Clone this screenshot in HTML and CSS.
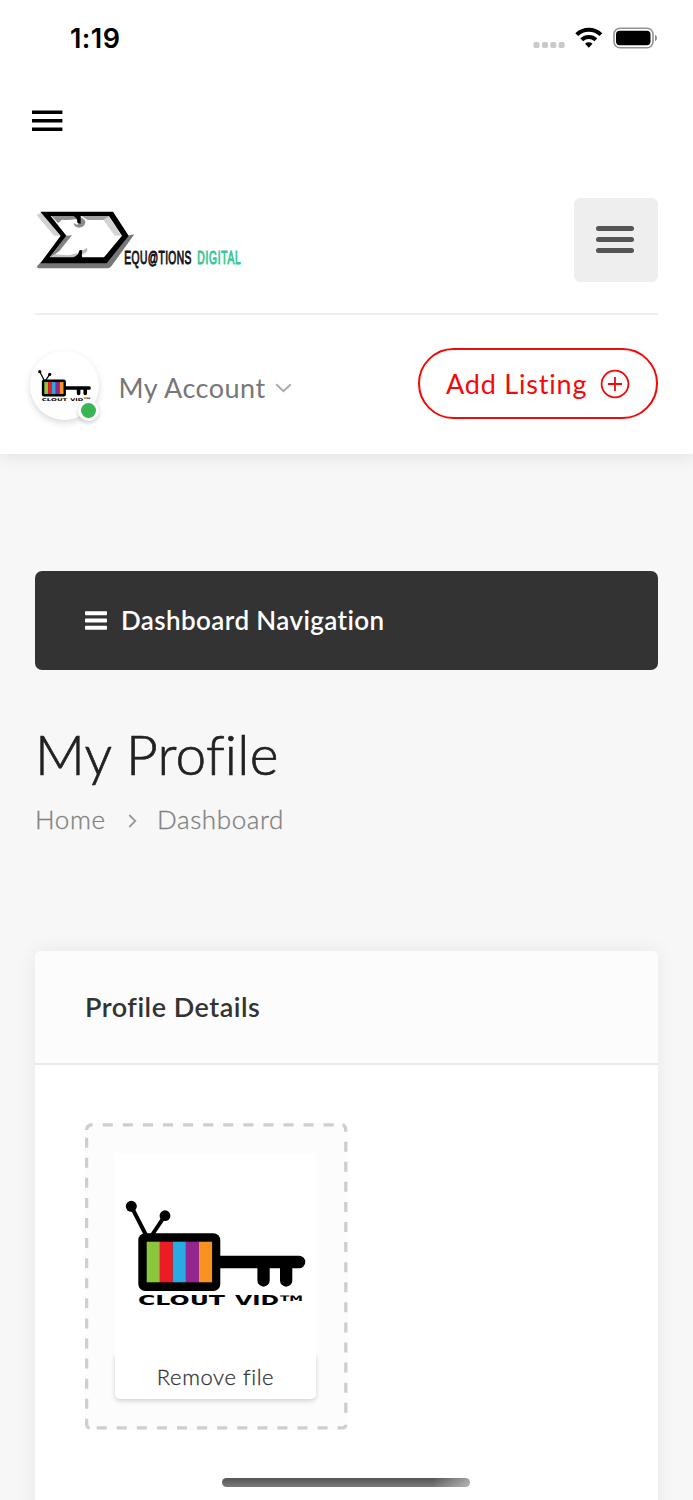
FILE: index.html
```html
<!DOCTYPE html>
<html lang="en">
<head>
<meta charset="utf-8">
<title>My Profile</title>
<link rel="stylesheet" href="styles.css">
</head>
<body>
<header class="header">
  <div class="status">
    <span class="time">1:19</span>
    <svg class="status-icons" width="126" height="24" viewBox="0 0 126 24">
      <g fill="#c9c9c9"><rect x="1.5" y="17" width="6" height="6" rx="1.7"/><rect x="10" y="17" width="6" height="6" rx="1.7"/><rect x="18.3" y="17" width="6" height="6" rx="1.7"/><rect x="26.6" y="17" width="6" height="6" rx="1.7"/></g>
      <g fill="none" stroke="#000" stroke-width="4"><path d="M44.7 9.7a17.2 17.2 0 0 1 24.2 0"/><path d="M49.7 14.8a10.2 10.2 0 0 1 14.2 0"/></g>
      <path d="M53.1 18.7a5.4 5.4 0 0 1 7.4 0l-3.7 4z"/>
      <rect x="82" y="3.3" width="39" height="19.4" rx="6" fill="none" stroke="#929292" stroke-width="1.6"/>
      <rect x="84" y="5.8" width="34.5" height="14.5" rx="3.7"/>
      <path d="M123 9.8q2 1 2 3.2t-2 3.2z" fill="#8c8c8c"/>
    </svg>
  </div>
  <div class="appbar">
    <svg width="31" height="22" viewBox="0 0 31 22"><path d="M0 .4h30.4v3.5H0zm0 8.7h30.4v3.4H0zm0 8.4h30.4v3.4H0z"/></svg>
  </div>
  <div class="brand-row">
    <svg class="logo" width="230" height="100" viewBox="0 0 690 300">
      <g transform="translate(21 45)">
        <path d="M14 30 30 22 86 92H66z" fill="#d2d2d2"/>
        <path d="M16 182 28 170H222L286 92 307 88 238 184Q234 190 226 190H20Q14 190 16 182z" fill="#777"/>
        <path d="M52 160 102 92 120 91 82 138z" fill="#828282"/>
        <path d="M70 148 52 160H122Q136 156 141 150L134 144Q120 152 98 150z" fill="#c4c4c4"/>
        <path d="M56 30H134V42Q110 46 90 44L78 54z" fill="#909090"/>
        <path d="M144 30H232V45H168L156 38z" fill="#a0a0a0"/>
        <path d="M214 44 248 92 268 92 230 34z" fill="#d4d4d4"/>
        <path d="M144 36Q162 44 160 54 156 68 140 68 126 66 125 54L136 60z" fill="#8b8b8b"/>
        <path d="M148 140 164 128Q170 136 160 144L148 150z" fill="#bcbcbc"/>
        <path fill-rule="evenodd" d="M25 20H243L290 92 224 175H25L86 92zM56 33 103 92 53 157H124Q138 153 143 135L151 136Q148 150 151 157H216L270 92 231 33H146V56L136 53Q136 38 124 33z"/>
      </g>
      <text transform="translate(298 222) scale(.56 1)" class="logo-word" textLength="359">EQU@TIONS</text>
      <text transform="translate(517 222) scale(.56 1)" class="logo-word green" textLength="233">DIGITAL</text>
    </svg>
    <button class="menu-btn" aria-label="Menu"><i></i><i></i><i></i></button>
  </div>
  <div class="account-row">
    <div class="avatar"><svg width="59" height="59" viewBox="0 0 201 201"><use href="#cloutvid"/></svg><b class="online"></b></div>
    <span class="account">My Account</span>
    <svg class="chev" width="17" height="10" viewBox="0 0 17 10"><path d="M1.2 1.2 8.5 8.2l7.3-7" fill="none" stroke="#aaa" stroke-width="2"/></svg>
    <a class="add"><span>Add Listing</span>
      <svg width="30" height="30" viewBox="0 0 30 30" fill="none" stroke="#f50808" stroke-width="1.8"><circle cx="15" cy="15" r="13.4"/><path d="M8 15h14M15 8v14"/></svg></a>
  </div>
</header>

<main class="main">
  <div class="dashnav">
    <svg width="22" height="19" viewBox="0 0 22 19" fill="#fff"><rect y=".3" width="22" height="4" rx=".8"/><rect y="7.5" width="22" height="4" rx=".8"/><rect y="14.7" width="22" height="4" rx=".8"/></svg>
    <span>Dashboard Navigation</span>
  </div>
  <h1 class="title">My Profile</h1>
  <nav class="crumbs"><span class="home">Home</span>
    <svg class="sep" width="9" height="14" viewBox="0 0 9 14"><path d="M1.3 1 7.3 7l-6 6" fill="none" stroke="#999" stroke-width="1.8"/></svg>
    <span class="dash">Dashboard</span></nav>
  <section class="card">
    <h2 class="card-head">Profile Details</h2>
    <div class="card-body">
      <div class="drop">
        <svg class="dashes" width="263" height="307" viewBox="85 1123 263 307" fill="none" stroke="#cecece" stroke-width="3.3">
          <path d="M102.8 1124.8H335M96.7 1427.8H334" stroke-dasharray="10 10.08"/>
          <path d="M86.6 1137.7V1416M345.8 1141.7V1418" stroke-dasharray="10 10.08"/>
          <path d="M86.6 1130q0-5.2 6-5.2M342.5 1124.8q3.3.5 3.3 7M337.7 1427.8h5q3.1 0 3.1-3M86.6 1418.7v5.3q0 3.8 3 3.8"/>
        </svg>
        <svg class="photo" width="201" height="201" viewBox="0 0 201 201">
          <g id="cloutvid">
            <path d="M16.3 53.3 31.5 83M50 62.7 37 82" stroke="#000" stroke-width="4" fill="none"/>
            <circle cx="16.3" cy="53.3" r="5.5"/><circle cx="50" cy="62.7" r="5.4"/>
            <rect x="23.3" y="80.3" width="82" height="57.7" rx="7"/>
            <path d="M100 102.7h84a6.3 6.3 0 0 1 0 12.6h-6.7v12.2a6.15 6.15 0 0 1-12.3 0v-12.2h-10.3v12.2a6.15 6.15 0 0 1-12.3 0v-12.2H100z"/>
            <path fill="#8cc63f" d="M31.7 88.7h13.2v40.6H31.7z"/>
            <path fill="#ed1c24" d="M44.8 88.7h13v40.6h-13z"/>
            <path fill="#29abe2" d="M57.8 88.7h13.1v40.6H57.8z"/>
            <path fill="#93278f" d="M70.9 88.7H84v40.6H70.9z"/>
            <path fill="#f7931e" d="M84 88.7h13.1v40.6H84z"/>
            <text x="23" y="151.7" class="tv-word" textLength="87" lengthAdjust="spacingAndGlyphs">CLOUT</text>
            <text x="120" y="151.7" class="tv-word" textLength="44" lengthAdjust="spacingAndGlyphs">VID</text>
            <text x="165" y="147.7" class="tv-tm" textLength="23" lengthAdjust="spacingAndGlyphs">TM</text>
          </g>
        </svg>
        <button class="remove">Remove file</button>
      </div>
    </div>
  </section>
</main>
<div class="home-indicator"></div>
</body>
</html>
```
FILE: styles.css
```css
* { box-sizing: border-box; }
body { margin: 0; width: 693px; height: 1500px; overflow: hidden; position: relative; background: #f7f7f7; font-family: Lato, "Open Sans", sans-serif; color: #333; }
svg { display: block; flex: none; }
button { border: 0; padding: 0; font: inherit; color: inherit; }
.tv-word { font: bold 13.3px "DejaVu Sans", sans-serif; }
.tv-tm { font: bold 7.6px "DejaVu Sans", sans-serif; }
.header { position: relative; height: 454px; background: #fff; box-shadow: 0 0 20px rgba(0,0,0,.12); }
.status { height: 76px; display: flex; justify-content: space-between; padding: 0 35px 0 70px; }
.time { font: 600 27px/36px Inter, sans-serif; color: #000; padding-top: 21px; letter-spacing: .4px; }
.status-icons { margin-top: 25px; }
.appbar { height: 114px; padding: 34px 32px 0; }
.brand-row { height: 125px; margin: 0 35px; border-bottom: 2px solid #eee; display: flex; justify-content: space-between; }
.logo { margin-left: -10px; }
.logo-word { font: 55px "Liberation Sans", sans-serif; fill: #151219; stroke: #151219; stroke-width: 3; }
.logo-word.green { fill: #35c795; stroke: #35c795; }
.menu-btn { width: 84px; height: 84px; margin-top: 7.5px; border-radius: 6px; background: #eee; display: flex; flex-direction: column; align-items: center; justify-content: center; gap: 6.3px; padding-right: 2px; }
.menu-btn i { width: 38.5px; height: 4.8px; border-radius: 3px; background: #555; }
.account-row { height: 139px; padding: 0 35px 0 29.5px; display: flex; align-items: flex-start; }
.avatar { position: relative; width: 69px; height: 69px; margin-top: 36px; border-radius: 50%; background: #fff; box-shadow: 0 3px 7px rgba(0,0,0,.15); padding: 5px; }
.online { position: absolute; right: 0; bottom: -1px; width: 21px; height: 21px; border-radius: 50%; background: #38b653; border: 3.6px solid #fff; box-shadow: 0 2px 4px rgba(0,0,0,.2); }
.account { width: 147px; margin: 55px 0 0 20px; font-size: 27px; line-height: 36px; letter-spacing: .5px; color: #777; white-space: nowrap; }
.chev { margin: 68px 0 0 9.5px; }
.add { margin: 33px 0 0 auto; width: 240px; height: 71px; border: 2px solid #f50808; border-radius: 36px; color: #f50808; font-size: 27px; letter-spacing: .8px; display: flex; align-items: center; justify-content: space-between; padding: 0 26px; white-space: nowrap; }
.main { padding: 117px 35px 0; }
.dashnav { height: 99px; border-radius: 7px; background: #333; color: #fff; display: flex; align-items: center; gap: 14px; padding: 0 50px 1px; font-size: 26px; font-weight: 600; letter-spacing: .4px; }
.title { margin: 48px 0 0; font-size: 55px; line-height: 72px; font-weight: 300; letter-spacing: .2px; -webkit-text-stroke: .7px #222; color: #222; }
.crumbs { display: flex; align-items: center; height: 36px; margin-top: 11px; font-size: 26px; font-weight: 300; letter-spacing: .6px; -webkit-text-stroke: .3px #808080; color: #808080; }
.home { width: 93px; }
.sep { margin-top: 4px; }
.dash { margin-left: 20px; }
.card { margin-top: 114px; height: 620px; border-radius: 6px; background: #fff; box-shadow: 0 0 20px rgba(0,0,0,.07); }
.card-head { margin: 0; height: 114px; border-bottom: 2px solid #e9e9e9; border-radius: 6px 6px 0 0; background: #fcfcfc; padding: 0 50px; font-size: 27px; line-height: 112px; font-weight: 600; letter-spacing: .5px; }
.card-body { padding: 58px 50px; }
.drop { position: relative; width: 263px; height: 307px; border-radius: 6px; background: #fcfcfc; padding: 30px; }
.dashes { position: absolute; left: 0; top: 0; }
.photo { background: #fff; }
.remove { display: block; width: 201px; height: 45px; background: #fff; border-radius: 0 0 5px 5px; box-shadow: 0 2px 5px rgba(0,0,0,.17); font-size: 22px; font-weight: 300; letter-spacing: .6px; -webkit-text-stroke: .3px #333; clip-path: inset(0 -12px -12px -12px); }
.home-indicator { position: absolute; left: 222px; top: 1478px; width: 248px; height: 9px; border-radius: 5px; background: linear-gradient(90deg, transparent 85%, rgba(255,255,255,.45)), linear-gradient(#555, #7a7a7a); }
```
